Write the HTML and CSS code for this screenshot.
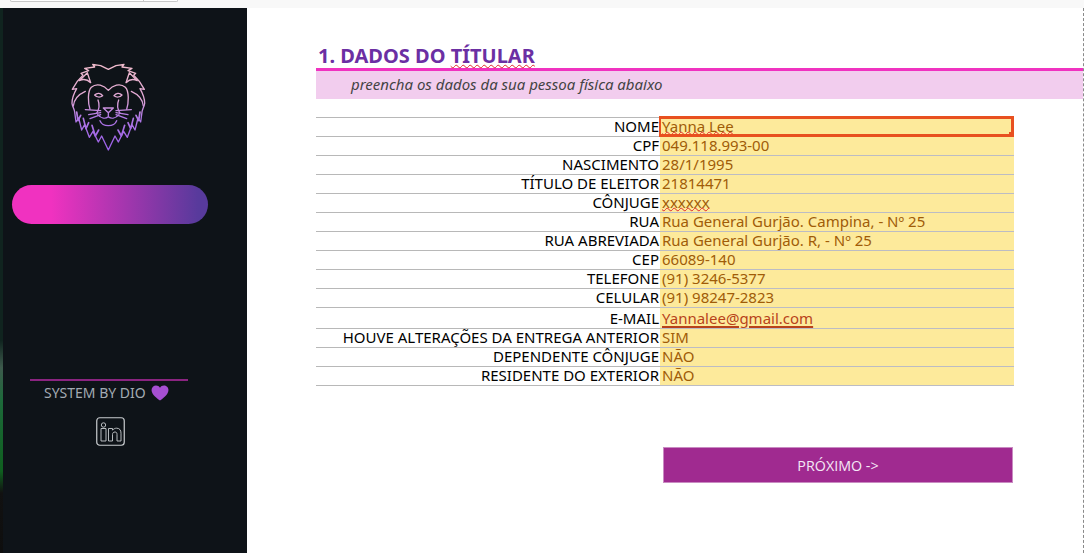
FILE: index.html
```html
<!DOCTYPE html>
<html lang="pt-BR">
<head>
    <meta charset="utf-8">
    <title>Dados do Titular</title>
    <link rel="stylesheet" href="styles.css">
</head>
<body>
    <div class="topbar"><div class="tabbox"><span class="tabbox-end"></span></div></div>
    <div class="app">
        <div class="wallpaper"></div>
        <aside class="sidebar">
            <svg class="lion" viewBox="0 0 330 330" fill="none" stroke="url(#liongrad)" stroke-width="4" stroke-linejoin="round" stroke-linecap="round">
                <defs>
                    <linearGradient id="liongrad" gradientUnits="userSpaceOnUse" x1="0" y1="40" x2="0" y2="300">
                        <stop offset="0" stop-color="#f0bccb"/>
                        <stop offset="0.42" stop-color="#e0a6d6"/>
                        <stop offset="0.62" stop-color="#b078e4"/>
                        <stop offset="1" stop-color="#9a5ee8"/>
                    </linearGradient>
                </defs>
                <!-- juba -->
                <path d="M175 58 L152 47 L128 43 L134 51 L104 55 L116 62 L93 70 L99 76 C90 84 76 100 67 118 L80 116 C72 130 66 146 66 160 C68 172 74 180 74 186 L78 216 L86 204 L95 240 L104 224 L118 262 L129 244 L145 276 L155 258 L175 300 L195 258 L205 276 L221 244 L232 262 L246 224 L255 240 L264 204 L272 216 L276 186 C276 180 282 172 284 160 C284 146 278 130 270 116 L283 118 C274 100 260 84 251 76 L257 70 L234 62 L246 55 L216 51 L222 43 L198 47 Z"/>
                <path d="M70 168 C72 148 88 132 106 124 M280 168 C278 148 262 132 244 124"/>
                <path d="M80 186 L84 212 L92 196 M270 186 L266 212 L258 196 M100 205 L108 236 L116 218 M250 205 L242 236 L234 218 M126 226 L136 258 L146 240 M224 226 L214 258 L204 240" stroke-width="5"/>
                <!-- orelhas -->
                <path d="M88 92 L112 68 L122 98 C112 88 100 86 88 92 Z M262 92 L238 68 L228 98 C238 88 250 86 262 92 Z"/>
                <!-- rosto -->
                <path d="M175 121 C162 106 140 98 124 112 C112 124 114 160 120 178 M175 121 C188 106 210 98 226 112 C238 124 236 160 230 178"/>
                <path d="M134 135 C142 127 152 129 158 137 C150 143 140 142 134 135 Z M216 135 C208 127 198 129 192 137 C200 143 210 142 216 135 Z"/>
                <path d="M160 174 L190 174 L175 188 Z M175 188 L175 200 C165 208 152 204 143 194 M175 200 C185 208 198 204 207 194"/>
                <path d="M150 212 C158 232 192 232 200 212 M144 150 C150 165 146 180 140 190 M206 150 C200 165 204 180 210 190"/>
                <!-- bigodes -->
                <path d="M152 182 L106 179 M152 188 L116 194 M152 194 L120 206 M198 182 L244 179 M198 188 L234 194 M198 194 L230 206"/>
            </svg>
            <div class="pill"></div>
            <div class="signature">
                <span>SYSTEM BY DIO</span>
                <svg class="heart" viewBox="0 0 20 18"><path d="M10 17.5 C4 13 0.5 9.5 0.5 5.5 C0.5 2.5 3 0.5 5.5 0.5 C7.5 0.5 9 1.5 10 3 C11 1.5 12.5 0.5 14.5 0.5 C17 0.5 19.5 2.5 19.5 5.5 C19.5 9.5 16 13 10 17.5 Z"/></svg>
            </div>
            <svg class="linkedin" viewBox="0 0 29 29" fill="none" stroke="#c9cdd0">
                <rect x="0.75" y="0.75" width="27.5" height="27.5" rx="3" stroke-width="1.2"/>
                <circle cx="7.5" cy="8" r="2.2" stroke-width="0.9"/>
                <path d="M5 11.5 H10 V24 H5 Z" stroke-width="0.9"/>
                <path d="M12.5 11.5 H16.5 V13.2 C17.6 11.8 19 11.2 20.6 11.2 C23.6 11.2 25 13.2 25 16.2 V24 H21 V17.4 C21 15.8 20.4 15 19 15 C17.4 15 16.5 16 16.5 17.6 V24 H12.5 Z" stroke-width="0.9"/>
            </svg>
        </aside>
        <main class="content">
            <h1 class="title">1. DADOS DO <span class="typo">TÍTULAR</span></h1>
            <p class="subtitle">preencha os dados da sua pessoa física abaixo</p>
            <div class="sheet">
                <table class="data">
                    <tr><td class="label">NOME</td><td class="value"><span class="typo">Yanna Lee</span></td></tr>
                    <tr><td class="label">CPF</td><td class="value">049.118.993-00</td></tr>
                    <tr><td class="label">NASCIMENTO</td><td class="value">28/1/1995</td></tr>
                    <tr><td class="label">TÍTULO DE ELEITOR</td><td class="value">21814471</td></tr>
                    <tr><td class="label">CÔNJUGE</td><td class="value"><span class="typo">xxxxxx</span></td></tr>
                    <tr><td class="label">RUA</td><td class="value">Rua General Gurjão. Campina, - Nº 25</td></tr>
                    <tr><td class="label">RUA ABREVIADA</td><td class="value">Rua General Gurjão. R, - Nº 25</td></tr>
                    <tr><td class="label">CEP</td><td class="value">66089-140</td></tr>
                    <tr><td class="label">TELEFONE</td><td class="value">(91) 3246-5377</td></tr>
                    <tr><td class="label">CELULAR</td><td class="value">(91) 98247-2823</td></tr>
                    <tr class="tall"><td class="label">E-MAIL</td><td class="value"><a class="mail" href="#">Yannalee@gmail.com</a></td></tr>
                    <tr><td class="label">HOUVE ALTERAÇÕES DA ENTREGA ANTERIOR</td><td class="value">SIM</td></tr>
                    <tr><td class="label">DEPENDENTE CÔNJUGE</td><td class="value">NÃO</td></tr>
                    <tr><td class="label">RESIDENTE DO EXTERIOR</td><td class="value">NÃO</td></tr>
                </table>
                <div class="selected-cell"><span class="handle"></span></div>
            </div>
            <button class="next">PRÓXIMO -&gt;</button>
        </main>
    </div>
</body>
</html>
```

FILE: styles.css
```css
html, body {
    margin: 0;
    height: 100%;
    overflow: hidden;
    background: #fff;
    font-family: "Noto Sans", "Open Sans", sans-serif;
}
.topbar {
    height: 8px;
    background: #f8f8f8;
}
.tabbox {
    box-sizing: border-box;
    width: 168px;
    height: 2px;
    margin-left: 10px;
    background: #fff;
    border: 1px solid #c8c8c8;
    border-top: 0;
    border-radius: 0 0 3px 3px;
    display: flex;
    justify-content: flex-end;
}
.tabbox-end {
    width: 33px;
    border-left: 1px solid #c8c8c8;
}
.app {
    display: flex;
    height: 545px;
}
.wallpaper {
    width: 3px;
    background: linear-gradient(#10241f 0, #10241f 61%, #3d5a4c 66%, #1d6a3a 72%, #0f5f1f 85%, #111 89%, #0e0e0e 100%);
}
.sidebar {
    width: 244px;
    box-sizing: border-box;
    padding: 42px 0 0 9px;
    background: #0e1318;
    display: flex;
    flex-direction: column;
}
.lion {
    width: 110px;
    height: 110px;
    margin-left: 38px;
}
.pill {
    width: 196px;
    height: 39px;
    margin-top: 25px;
    border-radius: 20px;
    background: linear-gradient(90deg, #f032c0 20%, #583a9c 95%);
}
.signature {
    width: 158px;
    margin: 155px 0 0 18px;
    border-top: 2px solid #8a2480;
    display: flex;
    align-items: center;
    padding: 2px 0 0 14px;
    box-sizing: border-box;
    gap: 5px;
    color: #a3abb3;
    font-size: 14px;
    line-height: 20px;
}
.heart {
    width: 18px;
    height: 16px;
    fill: #a64fd2;
}
.linkedin {
    width: 29px;
    height: 29px;
    margin: 14px 0 0 84px;
}
.content {
    flex: 1;
    padding: 36px 0 0 69px;
    border-right: 1px dashed #8a8a8a;
    min-width: 0;
}
.title {
    margin: 0;
    padding-left: 2px;
    height: 24px;
    line-height: 24px;
    font-size: 20px;
    font-weight: 700;
    color: #6b2fa3;
}
.typo {
    text-decoration: underline wavy #e0282a 1px;
    text-decoration-skip-ink: none;
    text-underline-offset: 1px;
}
.value .typo {
    text-underline-offset: -1px;
}
.subtitle {
    margin: 0;
    height: 28px;
    line-height: 26px;
    padding-left: 35px;
    border-top: 3px solid #f032c0;
    background: #f2cdee;
    font-size: 15px;
    font-style: italic;
    color: #444;
}
.sheet {
    position: relative;
    width: 698px;
    margin-top: 18px;
}
.data {
    width: 100%;
    border-collapse: collapse;
    border-top: 1px solid #b8b8b8;
    font-size: 15px;
    table-layout: fixed;
}
.data tr {
    height: 19px;
}
.data tr.tall {
    height: 21px;
}
.data td {
    padding: 0 0 2px;
    line-height: 16px;
    border-bottom: 1px solid #b8b8b8;
    white-space: nowrap;
}
.data tr.tall td {
    padding-bottom: 0;
}
.label {
    width: 344px;
    box-sizing: border-box;
    padding-right: 1px !important;
    text-align: right;
    color: #000;
}
.value {
    padding-left: 2px !important;
    background: #fdea9b;
    color: #a05c08;
    border-bottom-color: #bcbcc4 !important;
}
.mail {
    color: #b8431a;
    text-decoration: underline 2px;
    text-underline-offset: 2px;
}
.selected-cell {
    position: absolute;
    left: 343px;
    top: -1px;
    width: 355px;
    height: 21px;
    box-sizing: border-box;
    border: 3px solid #e8501f;
    border-left-width: 2px;
}
.handle {
    position: absolute;
    right: -3px;
    bottom: -3px;
    width: 5px;
    height: 5px;
    background: #e8501f;
}
.next {
    display: block;
    width: 350px;
    height: 36px;
    margin: 61px 0 0 347px;
    padding: 0;
    background: #a02a90;
    border: 1px solid #c98bc2;
    color: #f4e8f6;
    font-family: "Open Sans", sans-serif;
    font-size: 14.3px;
}
```
